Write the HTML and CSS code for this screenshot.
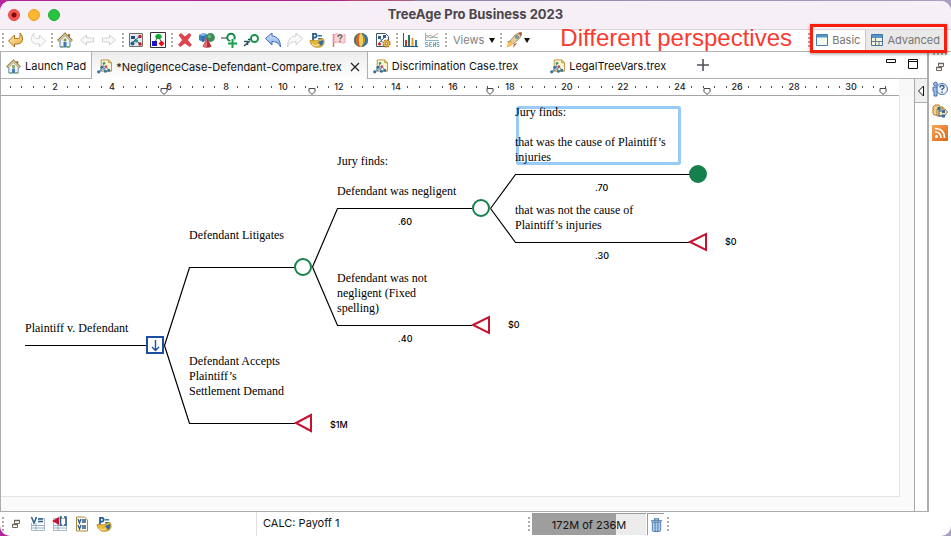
FILE: index.html
```html
<!DOCTYPE html>
<html lang="en">
<head>
<meta charset="utf-8">
<title>TreeAge Pro Business 2023</title>
<link rel="stylesheet" href="styles.css">
</head>
<body>
<svg class="defs" aria-hidden="true">
  <defs>
    <linearGradient id="gold" x1="0" y1="0" x2="1" y2="1"><stop offset="0" stop-color="#fff3c4"/><stop offset="1" stop-color="#e8a92c"/></linearGradient>
    <linearGradient id="sky" x1="0" y1="0" x2="0" y2="1"><stop offset="0" stop-color="#d6e6fb"/><stop offset="1" stop-color="#7da6e6"/></linearGradient>
    <linearGradient id="rss" x1="0" y1="0" x2="1" y2="1"><stop offset="0" stop-color="#f5a55c"/><stop offset="1" stop-color="#de6414"/></linearGradient>
    <symbol id="i-house" viewBox="0 0 16 16">
      <path d="M11 2h2v4h-2z" fill="#b06a4a"/>
      <path d="M3 7l5-4 5 4v8H3z" fill="#eef3fa" stroke="#5d84ad"/>
      <path d="M1 9l7-7 7 7" fill="none" stroke="#8a7a48" stroke-width="2.600"/>
      <path d="M1.600 8.800L8 2.400l6.400 6.400" fill="none" stroke="#e3d398" stroke-width="1.200"/>
      <path d="M6.500 10h3v5h-3z" fill="#3e78b8"/><path d="M7 7h2v2H7z" fill="#a2c93a" stroke="#567a2a" stroke-width=".6"/><path d="M4 14h2v1.500H4zM10 14h2v1.500h-2z" fill="#7aa83a"/>
    </symbol>
    <symbol id="i-tree" viewBox="0 0 16 16">
      <path d="M4.500 1h8l3 3v9h-11z" fill="#fff4d2" stroke="#b8923c"/><path d="M12.500 1v3h3" fill="#efd489" stroke="#b8923c"/>
      <path d="M2 14l4-6 3 5M6 8l5 1M6 8l2-4M2 14l8-5 3 3" fill="none" stroke="#4a7fae" stroke-width=".9"/>
      <circle cx="1.800" cy="13.700" r="1.700" fill="#39729f"/><circle cx="5" cy="9" r="1.500" fill="#376c9b"/><circle cx="9" cy="13" r="1.600" fill="#39729f"/><circle cx="12.500" cy="12" r="1.600" fill="#376c9b"/><circle cx="7.500" cy="4.500" r="1.300" fill="#2f9b63"/><circle cx="9.500" cy="8" r="1.300" fill="#d3415d"/>
    </symbol>
    <symbol id="i-turn" viewBox="0 0 16 16"><path d="M.5 9l6-6v3.500h2.500c2.500 0 3.500-1.500 3-5.500 4.500 5 3 11-3 11H6.500v3z" stroke-linejoin="round"/></symbol>
    <symbol id="i-curve" viewBox="0 0 16 16"><path d="M.5 6.500l6.500-5.500v3c5 0 8.500 4 8.500 11-1.500-4-4.500-5.500-8.500-5.500V13z" stroke-linejoin="round"/></symbol>
    <symbol id="i-arrow" viewBox="0 0 16 16"><path d="M1.500 8l6-5v3h7v4h-7v3z" fill="#fafafa" stroke="#cfcfcf" stroke-linejoin="round"/></symbol>
    <symbol id="i-python" viewBox="0 0 16 16">
      <path d="M4 1v8M4 1.800h2.500q2.500 2 0 3.800H4" fill="none" stroke="#2a5f8d" stroke-width="1.800"/>
      <path d="M9 3h4v1.500H9zM9 6h4v1.500H9z" fill="#3979a9"/>
      <path d="M1 8.500c4-1 5 1 8 0 2-.8 2-2 5-2 2 3 1.200 6.500-1.500 8-3.500 1.500-7.500 1-9.500-1.500-1.500-1.500-2-3-2-4.500z" fill="#eab738" stroke="#a87c20" stroke-width=".7"/>
      <path d="M9 10l5-2c1 2 0 4.500-2 6z" fill="#346e9a"/><path d="M3 12c2 2 5 2 7 .5" fill="none" stroke="#fff0a8"/>
    </symbol>
    <symbol id="i-restore" viewBox="0 0 10 10"><path d="M3.500 1.500h5v3h-5zM1.500 5.500h5v3h-5z" fill="#fff" stroke="#6f675d"/><path d="M3 1.500h6M1 5.500h6" stroke="#6f675d" stroke-width="1.500"/></symbol>
    <symbol id="i-sheet" viewBox="0 0 16 16"><path d="M1.500 2.500h13v12h-13z" fill="#fff" stroke="#a9b6c2"/><path d="M2 9.500h12M2 12h12M6 7v7" stroke="#91acc5"/></symbol>
  </defs>
</svg>

<div class="window">
  <header class="titlebar">
    <div class="lights"><button class="light close" aria-label="Close"></button><button class="light min" aria-label="Minimize"></button><button class="light max" aria-label="Zoom"></button></div>
    <h1>TreeAge Pro Business 2023</h1>
  </header>

  <div class="toolbar">
    <i class="grip"></i>
    <button class="tool" aria-label="Undo"><svg fill="url(#gold)" stroke="#a87322"><use href="#i-turn"/></svg></button>
    <button class="tool" aria-label="Redo"><svg class="flip" fill="#fafafa" stroke="#d4d4d4"><use href="#i-turn"/></svg></button>
    <i class="grip"></i>
    <button class="tool" aria-label="Home"><svg><use href="#i-house"/></svg></button>
    <button class="tool" aria-label="Back"><svg><use href="#i-arrow"/></svg></button>
    <button class="tool" aria-label="Forward"><svg class="flip"><use href="#i-arrow"/></svg></button>
    <i class="grip"></i>
    <button class="tool" aria-label="Tree diagram"><svg viewBox="0 0 16 16"><path d="M1.500 1.500h13v13h-13z" fill="#e3e9ef" stroke="#77706a"/><path d="M4 11l8-7M5 5l7 7M4 12l3-4" stroke="#235c8e" fill="none"/><path d="M3 4h4v3H3z" fill="#1d4f8d"/><circle cx="12" cy="4.500" r="1.700" fill="#bb2030"/><circle cx="4.500" cy="11.500" r="2" fill="#1f5e9a"/><circle cx="8.500" cy="9" r="1.600" fill="#1e9858"/><circle cx="12" cy="12" r="1.800" fill="#bb2030"/></svg></button>
    <button class="tool" aria-label="Influence diagram"><svg viewBox="0 0 16 16"><path d="M.5.5h15v15H.5z" fill="#fff" stroke="#333"/><path d="M5 10l3-6 4 7" stroke="#555" fill="none"/><ellipse cx="8.500" cy="4.500" rx="3.200" ry="2.600" fill="#0ca836"/><path d="M2 9h5v5H2z" fill="#1717c8"/><path d="M11.500 8.500l3 3-3 3-3-3z" fill="#f00c1a"/></svg></button>
    <i class="grip"></i>
    <button class="tool" aria-label="Delete"><svg viewBox="0 0 16 16"><path d="M2 3l2-1.500L8 5l4-3.500L14 3l-3.500 5L14.500 13l-2 1.500L8 11l-4.500 3.500-2-1.500L5.500 8z" fill="#e0434b" stroke="#c9404a" stroke-width=".8"/></svg></button>
    <button class="tool" aria-label="Node type"><svg viewBox="0 0 16 16"><path d="M0 3l4-2 4 1v6l-4 2-4-2z" fill="#3c81bd"/><path d="M0 3l4-2 4 1-4 2z" fill="#8bbce2"/><path d="M4 4.500V10" stroke="#225c91"/><circle cx="11.500" cy="5.500" r="4.400" fill="#3c8d54"/><circle cx="10.500" cy="4.500" r="1.800" fill="#6eb381"/><path d="M8 5.500l4.500 9Q8 17 3.500 14.500z" fill="#b62e3b"/><path d="M8 5.500v10q-2 0-4-1z" fill="#de6c70"/></svg></button>
    <button class="tool" aria-label="Add node"><svg viewBox="0 0 16 16"><path d="M0 6h6" stroke="#333"/><circle cx="10" cy="5.500" r="3.700" fill="none" stroke="#128646" stroke-width="2"/><path d="M11.500 7v9M7 11.500h9" stroke="#fff" stroke-width="4"/><path d="M11.500 7v9M7 11.500h9" stroke="#14a04b" stroke-width="2"/></svg></button>
    <button class="tool" aria-label="Insert node"><svg viewBox="0 0 16 16"><path d="M1 14l6-5M1 9.500h3.500v3.500" stroke="#294e61" fill="none" stroke-width="1.500"/><path d="M5 7.500h4" stroke="#294e61" stroke-width="1.300"/><circle cx="11.500" cy="6.500" r="3.500" fill="none" stroke="#169447" stroke-width="2"/></svg></button>
    <button class="tool" aria-label="Undo edit"><svg fill="url(#sky)" stroke="#3d6bb5"><use href="#i-curve"/></svg></button>
    <button class="tool" aria-label="Redo edit"><svg class="flip" fill="#fafafa" stroke="#cfcfcf"><use href="#i-curve"/></svg></button>
    <button class="tool" aria-label="Python"><svg><use href="#i-python"/></svg></button>
    <button class="tool" aria-label="Flag"><svg viewBox="0 0 16 16"><path d="M2.500 2v13" stroke="#e0757b" stroke-width="1.500"/><path d="M3 2.500q3-1.500 6 0t5 0v8q-3 1-5 0t-6 0z" fill="#fbd6d8" stroke="#f0a5a9"/><path d="M7 5q0-2 2-2t2 1.500q0 1-1.500 1.500L9 7.500M9 8.500V10" fill="none" stroke="#6a6a6a" stroke-width="1.300"/></svg></button>
    <button class="tool" aria-label="Globe"><svg viewBox="0 0 16 16"><circle cx="8" cy="8" r="7" fill="#d84638"/><path d="M8 1a7 7 0 0 0 0 14z" fill="#397b6a"/><ellipse cx="8" cy="8" rx="4.800" ry="7" fill="#e99627"/><path d="M8 1C2 1 2 15 8 15z" fill="#d95a35"/><ellipse cx="8" cy="8" rx="2.200" ry="7" fill="#f5cf52"/><path d="M8 1a7 7 0 0 1 0 14q8-7 0-14z" fill="#3178a5"/><path d="M8 1q5 7 0 14 7-7 0-14z" fill="#6aa353"/></svg></button>
    <button class="tool" aria-label="Tree preferences"><svg viewBox="0 0 16 16"><path d="M1.500 1.500h9l3 3v10h-12z" fill="#fff" stroke="#495665"/><path d="M3 4h3v3H3zM8 3h3v3H8z" fill="#315f9c"/><path d="M3 12l6-6M5 5l2 5" stroke="#315f9c"/><circle cx="4.500" cy="12" r="1.600" fill="#c12b39"/><circle cx="11.500" cy="11.500" r="3.200" fill="#f1bd4d" stroke="#b37b1c" stroke-width="2" stroke-dasharray="1.500 1"/><circle cx="11.500" cy="11.500" r="2.600" fill="#f1bd4d"/><circle cx="11.500" cy="11.500" r="1.300" fill="#fff" stroke="#9d6c19"/></svg></button>
    <i class="grip"></i>
    <button class="tool" aria-label="Bar chart"><svg viewBox="0 0 16 16"><path d="M1.500 1v13.500H16" fill="none" stroke="#1c5b8a"/><path d="M3 8h2v6H3z" fill="#c93545"/><path d="M6 3h2v11H6z" fill="#26795a"/><path d="M9.500 6h2v8h-2z" fill="#e29b25"/><path d="M13 8h2v6h-2z" fill="#287bae"/></svg></button>
    <button class="tool" aria-label="Sensitivity analysis"><svg viewBox="0 0 16 16"><path d="M1.500 1v7.500H15" fill="none" stroke="#8cb4cb"/><path d="M2 6l4-3 3 2 5-4" fill="none" stroke="#e08f95"/><path d="M2 3l4 3 4-1 4 1" fill="none" stroke="#7ab69b"/><path d="M4 10.500H1.500v2H4v2H1M8 10.500H5.500v4H8M5.500 12.500h2M9.500 15v-4.500l2 4V10M15.500 10.500H13v2h2v2h-2.500" fill="none" stroke="#83aac3"/></svg></button>
    <i class="grip"></i>
    <button class="views">Views<span class="caret"></span></button>
    <i class="grip"></i>
    <button class="rocket" aria-label="Launch"><svg viewBox="0 0 16 16"><path d="M5 8L1 10l3 1zM8 12l-1 4 4-5z" fill="#a8543b"/><path d="M4 9l5-6q3-2.500 6.500-2.500Q16 4 13 7l-6 5z" fill="#e9cb98" stroke="#9a804f" stroke-width=".8"/><path d="M12 1q2-.7 3.500-.5.200 2-.5 3.500z" fill="#a15b3b"/><circle cx="11" cy="5" r="1.600" fill="#75a7d1" stroke="#4b6c8c" stroke-width=".6"/><path d="M4 9l3 3q-2 3-6.500 3.500Q1 11 4 9z" fill="#f6c05a"/></svg><span class="caret"></span></button>
    <div class="perspectives">
      <i class="grip"></i>
      <button class="persp"><svg viewBox="0 0 12 12"><path d="M.5.5h11v11H.5z" fill="#f5faef" stroke="#497fa9"/><path d="M1 1h10v2.500H1z" fill="#5695c5"/></svg>Basic</button>
      <button class="persp on"><svg viewBox="0 0 12 12"><path d="M.5.5h11v11H.5z" fill="#f8f4dc" stroke="#3f75a3"/><path d="M1 1h10v3H1z" fill="#5695c5"/><path d="M4.500 4v7.500M4.500 7.500h7M8 7.500V11M1 7.500h3" stroke="#62798b"/></svg>Advanced</button>
    </div>
    <div class="note">Different perspectives</div>
  </div>

  <div class="workbench">
    <main class="editor">
      <nav class="tabs">
        <button class="tab first"><svg><use href="#i-house"/></svg>Launch Pad</button>
        <button class="tab active"><svg><use href="#i-tree"/></svg>*NegligenceCase-Defendant-Compare.trex<svg class="x" viewBox="0 0 10 10"><path d="M1 1l8 8M9 1L1 9" stroke="#222" stroke-width="1.200"/></svg></button>
        <button class="tab second"><svg><use href="#i-tree"/></svg>Discrimination Case.trex</button>
        <button class="tab third"><svg><use href="#i-tree"/></svg>LegalTreeVars.trex</button>
        <button class="add" aria-label="New tab"><svg viewBox="0 0 12 12"><path d="M6 0v12M0 6h12" stroke="#50545c" stroke-width="1.600"/></svg></button>
        <div class="panectl">
          <button aria-label="Minimize pane"><svg viewBox="0 0 10 10"><path d="M.5.500h9v3h-9z" fill="#fff" stroke="#111"/></svg></button>
          <button aria-label="Maximize pane"><svg viewBox="0 0 10 10"><path d="M.5.500h9v9h-9zM0 2.500h10" fill="#fff" stroke="#111"/></svg></button>
        </div>
      </nav>
      <div class="pane">
        <div class="view">
          <svg class="ruler" id="ruler" aria-label="Ruler"></svg>
          <div class="scroll">
            <svg class="tree" viewBox="1 96 898 400" preserveAspectRatio="xMinYMin meet">
              <rect x="517.500" y="107.500" width="162" height="56" rx="1" fill="none" stroke="#99cbf8" stroke-width="3"/>
              <g fill="none" stroke="#000" stroke-width="1.200">
                <path d="M25 345.500H146M164.500 345.500L189.500 267.500H294M164.500 345.500L189.500 423.500H295"/>
                <path d="M312.500 267L337.500 208.500H472M312.500 267L337.500 325.500H472"/>
                <path d="M490.500 208.500L515.500 174.500H690M490.500 208.500L515.500 242.500H690"/>
              </g>
              <g fill="#fff" stroke="#15804c" stroke-width="2"><circle cx="303" cy="267" r="8"/><circle cx="481" cy="208" r="8"/><circle cx="698" cy="174" r="8" fill="#15804c"/></g>
              <g fill="#fff" stroke="#c4122f" stroke-width="2"><path d="M296 423l15-8v16zM473 325l16-8v16zM690 242l16-8v16z"/></g>
              <path d="M147 337h16v16h-16z" fill="#fff" stroke="#1b4fa3" stroke-width="2"/><path d="M155.500 340v10M152 347l3.500 3.500 3.500-3.500" fill="none" stroke="#1b4fa3" stroke-width="1.400"/>
              <g class="label">
                <text x="25" y="332">Plaintiff v. Defendant</text>
                <text x="189" y="239">Defendant Litigates</text>
                <text x="189" y="365">Defendant Accepts<tspan x="189" dy="15">Plaintiff’s</tspan><tspan x="189" dy="15">Settlement Demand</tspan></text>
                <text x="337" y="165">Jury finds:<tspan x="337" dy="30">Defendant was negligent</tspan></text>
                <text x="337" y="282">Defendant was not<tspan x="337" dy="15">negligent (Fixed</tspan><tspan x="337" dy="15">spelling)</tspan></text>
                <text x="515" y="116">Jury finds:<tspan x="515" dy="30">that was the cause of Plaintiff’s</tspan><tspan x="515" dy="15">injuries</tspan></text>
                <text x="515" y="214">that was not the cause of<tspan x="515" dy="15">Plaintiff’s injuries</tspan></text>
              </g>
              <g class="value">
                <text x="398" y="225">.60</text><text x="398" y="342">.40</text><text x="595" y="191">.70</text><text x="595" y="259">.30</text>
                <text x="330" y="428">$1M</text><text x="508" y="328">$0</text><text x="725" y="245">$0</text>
              </g>
            </svg>
          </div>
        </div>
        <div class="palette"><button aria-label="Show palette"><svg viewBox="0 0 6 10"><path d="M5.500 0v10L.5 5z" fill="#fff" stroke="#111"/></svg></button></div>
      </div>
    </main>
    <aside class="trim">
      <i class="grip wide"></i>
      <button aria-label="Restore"><svg class="small"><use href="#i-restore"/></svg></button>
      <button aria-label="Help"><svg viewBox="0 0 16 16"><circle cx="10" cy="8" r="5.500" fill="#eaf1fa" stroke="#4771ad"/><path d="M8 6.500q0-2 2-2t2 1.700q0 1-2 2v1M10 10.500V12" fill="none" stroke="#34588f" stroke-width="1.300"/><circle cx="3.500" cy="3" r="1.900" fill="#9cbce0" stroke="#4771ad"/><path d="M1 6h4v9H2V10H1z" fill="#9cbce0" stroke="#4771ad"/></svg></button>
      <button aria-label="Tree explorer"><svg viewBox="0 0 16 16"><path d="M1 4l2-2h4l1 2h3v8H3q-2 0-2-2z" fill="#f6cf84" stroke="#b17b27"/><path d="M5 6h8l2.500 3-3 4H5z" fill="#fae2ac" stroke="#b17b27"/><path d="M7 5v8h4M7 8h4" fill="none" stroke="#2a6296"/><path d="M5.500 4h3v3h-3zM10 7h3v3h-3zM10 11.500h3v3h-3z" fill="#2f70a8"/></svg></button>
      <button aria-label="News feed"><svg viewBox="0 0 16 16"><rect width="16" height="16" rx="1" fill="url(#rss)"/><circle cx="4.500" cy="11.500" r="1.500" fill="#fff"/><path d="M3 7q6 0 6 6M3 3.500q9.500 0 9.500 9.500" fill="none" stroke="#fff" stroke-width="1.600"/></svg></button>
    </aside>
  </div>

  <footer class="status">
    <div class="stools">
      <i class="grip"></i>
      <button class="tool" aria-label="Restore views"><svg class="small"><use href="#i-restore"/></svg></button>
      <button class="tool" aria-label="Variables"><svg viewBox="0 0 16 16"><use href="#i-sheet"/><path d="M1 1h7v6H1z" fill="#fff"/><path d="M1.500 1l2.500 6 2.500-6M8 3h5M8 5.500h5" fill="none" stroke="#285a8a" stroke-width="1.500"/></svg></button>
      <button class="tool" aria-label="Payoffs"><svg viewBox="0 0 16 16"><use href="#i-sheet"/><path d="M0 5l7-4v8z" fill="#c4162e"/><path d="M10 1H8.500v8H10M12 1h2v8h-2" fill="none" stroke="#285a8a" stroke-width="1.500"/></svg></button>
      <button class="tool" aria-label="Variable definitions"><svg viewBox="0 0 16 16"><path d="M2.500 1h8l3 3v11h-11z" fill="#fffbe9" stroke="#a98a41"/><path d="M4 3l1.500 4L7 3M8 4h4M8 6h4M4 9l1.500 4L7 9M8 10h4M8 12h4" fill="none" stroke="#285a8a" stroke-width="1.300"/></svg></button>
      <button class="tool" aria-label="Python editor"><svg><use href="#i-python"/></svg></button>
    </div>
    <div class="calc">CALC: Payoff 1</div>
    <div class="heap">
      <i class="grip"></i>
      <div class="meter">172M of 236M</div>
      <button aria-label="Run garbage collector"><svg viewBox="0 0 14 16"><path d="M1 3.500h12M5 3V1.500h4V3" fill="none" stroke="#4778aa" stroke-width="1.300"/><path d="M2.500 5h9v8.500q0 1.500-1.500 1.500H4q-1.500 0-1.500-1.500z" fill="#b2cdec" stroke="#4778aa"/><path d="M5.500 5v10M8.500 5v10" stroke="#4778aa"/></svg></button>
      <i class="grip"></i>
    </div>
  </footer>
</div>
<script src="ruler.js"></script>
</body>
</html>
```
FILE: styles.css
```css
* { box-sizing: border-box; }
html, body { height: 100%; }
body {
  margin: 0;
  padding-top: 1px;
  background: linear-gradient(90deg, #b5259b 0, #a8258c 36%, #b5496f 37%, #a9607f 43%, #8c84a8 44%, #a89fc2 100%);
  font-family: Inter, "Liberation Sans", sans-serif;
  font-size: 11px;
  color: #111;
}
button { margin: 0; padding: 0; border: 0; background: none; font: inherit; color: inherit; }
svg { display: block; flex: none; }
.defs { position: absolute; width: 0; height: 0; }

.window {
  height: 100%;
  display: flex;
  flex-direction: column;
  background: #fff;
  border-radius: 10px;
  overflow: hidden;
}

.titlebar {
  height: 28px;
  flex: none;
  display: grid;
  grid-template-columns: 1fr auto 1fr;
  align-items: center;
  background: #f6eff6;
}
.lights { display: flex; gap: 8px; padding-left: 8px; }
.light { width: 12px; height: 12px; border-radius: 50%; }
.close { background: radial-gradient(circle, #7c0a08 2px, #f9544d 3px); border: 1px solid #e2463f; }
.min { background: #fdb62f; border: 1px solid #e6a02b; }
.max { background: #26c43f; border: 1px solid #1fab33; }
h1 { margin: 0; font-size: 13px; line-height: 16px; padding-bottom: 2px; font-weight: 700; color: #4b454b; }

.toolbar {
  position: relative;
  height: 23px;
  flex: none;
  display: flex;
  align-items: center;
  padding-bottom: 1px;
  border-top: 1px solid #dcd6dc;
  border-bottom: 1px solid #b4b4b4;
}
.grip {
  flex: none;
  width: 5px;
  height: 15px;
  background: repeating-linear-gradient(#b4ada2 0 2px, transparent 2px 4px) center / 2px 100% no-repeat;
}
.grip.wide { width: 14px; height: 2px; background: repeating-linear-gradient(90deg, #b4ada2 0 2px, transparent 2px 4px); }
.tool { width: 22px; height: 20px; display: flex; align-items: center; justify-content: center; }
.tool svg { width: 16px; height: 16px; }
.tool svg.small { width: 10px; height: 10px; }
.flip { transform: scaleX(-1); }
.caret { border: 3px solid transparent; border-top: 5px solid #111; border-bottom: 0; }
.views { display: flex; align-items: center; gap: 5px; padding: 0 3px 0 5px; color: #808080; }
.rocket { display: flex; align-items: center; gap: 1px; padding-left: 2px; }
.rocket svg { width: 18px; height: 16px; }
.perspectives { position: relative; margin-left: auto; margin-right: 6px; display: flex; align-items: center; }
.persp { display: flex; align-items: center; gap: 4px; height: 20px; padding: 0 5px; color: #757575; }
.persp svg { width: 12px; height: 12px; }
.persp.on { background: #e9e9e9; border-left: 1px solid #c6c6c6; }
.perspectives::after {
  content: "";
  position: absolute;
  inset: -6px -2px -3px 4px;
  border: 3px solid #fb1d0d;
  box-shadow: 0 1px 3px #0006;
  z-index: 2;
}
.note {
  position: absolute;
  right: 159px;
  top: -6px;
  font: 24px/28px "Liberation Sans", sans-serif;
  color: #fb3a32;
}

.workbench { flex: 1; min-height: 0; display: flex; }
.editor { flex: 1; min-width: 0; display: flex; flex-direction: column; border: 1px solid #acacac; border-top: 0; border-right-width: 2px; }
.tabs { height: 27px; flex: none; display: flex; align-items: stretch; border-bottom: 1px solid #b0b0b0; }
.tab { display: flex; align-items: center; gap: 4px; padding: 2px 5px 0; white-space: nowrap; }
.tab svg { width: 15px; height: 15px; }
.tab svg.x { width: 10px; height: 10px; margin-left: 4px; }
.first { border-right: 1px solid #b0b0b0; }
.active { margin-bottom: -1px; background: linear-gradient(#ececec, #fff); border-right: 1px solid #b0b0b0; padding-right: 7px; }
.second { padding-right: 27px; }
.add { margin-left: 26px; }
.add svg { width: 12px; height: 12px; }
.panectl { margin-left: auto; display: flex; gap: 12px; padding: 7px 9px 0 0; align-items: flex-start; }
.panectl svg { width: 10px; height: 10px; }
.panectl button { height: 10px; }
.pane { flex: 1; min-height: 0; display: flex; }
.view { flex: 1; min-width: 0; display: flex; flex-direction: column; background: #fafafa; }
.ruler { width: 100%; height: 17px; flex: none; background: linear-gradient(#a4a4a4, #a4a4a4) left bottom / calc(100% - 15px) 1px no-repeat, linear-gradient(90deg, #fff calc(100% - 15px), #f8f8f8 0); font-size: 9px; font-weight: 500; }
.scroll { flex: 1; min-height: 0; margin: 0 14px 14px 0; background: #fff; border-right: 1px solid #e4e4e4; border-bottom: 1px solid #e4e4e4; overflow: hidden; }
.tree { width: 898px; height: 400px; }
.label { font: 12px "Liberation Serif", serif; }
.value { font: 500 9px Inter, "Liberation Sans", sans-serif; }
.palette { width: 13px; border-left: 1px solid #a9a9a9; }
.palette button { width: 100%; height: 24px; display: flex; align-items: center; justify-content: center; background: #f0f0f0; border-bottom: 1px solid #b0b0b0; }
.palette svg { width: 6px; height: 10px; }
.trim { width: 22px; flex: none; display: flex; flex-direction: column; align-items: center; padding-top: 1px; gap: 6px; }
.trim svg { width: 16px; height: 16px; }
.trim svg.small { width: 10px; height: 10px; margin: 1px 0 3px; }

.status { height: 24px; flex: none; display: flex; align-items: stretch; }
.stools { width: 257px; display: flex; align-items: center; border-right: 1px solid #e0e0e0; }
.calc { flex: 1; padding: 4px 6px; line-height: 15px; }
.heap { flex: none; width: 425px; display: flex; align-items: center; gap: 1px; }
.meter { width: 114px; height: 22px; padding-top: 1px; text-align: center; line-height: 20px; border-top: 1px solid #999; background: linear-gradient(90deg, #9e9e9e 74%, #ececec 0); }
.heap button { width: 17px; height: 22px; display: flex; align-items: center; justify-content: center; border-left: 1px solid #999; border-top: 1px solid #999; }
.heap svg { width: 13px; height: 16px; }
```
FILE: ruler.js
```js
const NS = "http://www.w3.org/2000/svg";
const ruler = document.getElementById("ruler");
const minor = 11.36;

function add(name, attrs, text) {
  const el = document.createElementNS(NS, name);
  for (const key in attrs) el.setAttribute(key, attrs[key]);
  if (text) el.textContent = text;
  ruler.appendChild(el);
}

for (let i = 0; i <= 78; i++) {
  const x = Math.round(i * minor - 2.5);
  if (i > 0 && i % 5 === 0 && i / 5 <= 15) {
    add("text", { x, y: 11, "text-anchor": "middle", fill: "#222" }, String(i / 5 * 2));
  } else {
    add("rect", { x, y: 7, width: 1, height: 2, fill: "#555" });
  }
}

for (const x of [163, 311, 489, 706, 882]) {
  add("path", { d: `M${x - 3} 9.500h6v3l-3 3l-3-3z`, fill: "#fff", stroke: "#444" });
}
```
